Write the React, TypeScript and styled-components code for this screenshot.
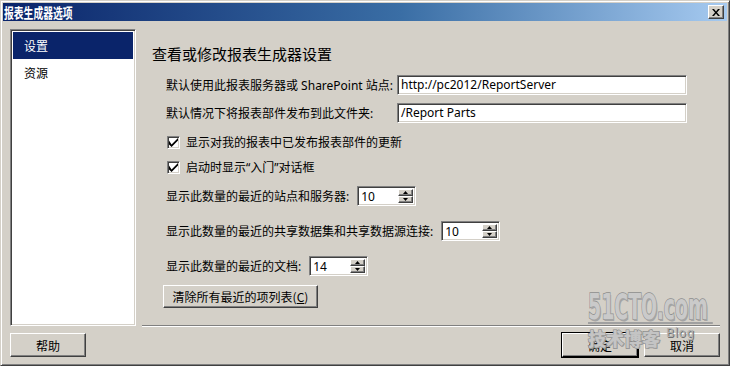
import React from 'react';
import styled, { createGlobalStyle, css } from 'styled-components';

const GlobalStyle = createGlobalStyle`
  html, body {
    margin: 0;
    padding: 0;
    background: #d4d0c8;
  }
  * {
    box-sizing: border-box;
  }
`;

const FONT = `"Noto Sans", "Noto Sans CJK SC", sans-serif`;

const raised = css`
  border: 1px solid;
  border-color: #ffffff #404040 #404040 #ffffff;
  box-shadow: inset -1px -1px #808080, inset 1px 1px #d4d0c8;
`;

const sunken = css`
  border: 1px solid;
  border-color: #808080 #ffffff #ffffff #808080;
  box-shadow: inset 1px 1px #404040, inset -1px -1px #d4d0c8;
`;

const Window = styled.div`
  position: relative;
  width: 730px;
  height: 366px;
  background: #d4d0c8;
  border: 1px solid;
  border-color: #d4d0c8 #404040 #404040 #d4d0c8;
  box-shadow: inset 1px 1px #ffffff, inset -1px -1px #808080;
  padding: 2px;
  display: flex;
  flex-direction: column;
  font-family: ${FONT};
  font-size: 12px;
  color: #000;
  overflow: hidden;
`;

const TitleBar = styled.div`
  height: 18px;
  flex: none;
  display: flex;
  align-items: center;
  justify-content: space-between;
  padding: 0 3px 0 1px;
  background: linear-gradient(to right, #0a246a 0%, #3a6ea5 55%, #a6caf0 100%);
`;

const TitleText = styled.span`
  display: inline-block;
  color: #fff;
  font-family: "Noto Sans CJK SC", sans-serif;
  font-weight: bold;
  font-size: 14px;
  line-height: 18px;
  transform: scaleX(0.7);
  transform-origin: left center;
`;

const CloseButton = styled.div`
  ${raised};
  width: 16px;
  height: 14px;
  background: #d4d0c8;
  display: flex;
  align-items: center;
  justify-content: center;
`;

const Body = styled.div`
  flex: 1;
  display: flex;
  flex-direction: column;
  padding: 8px 7px 0 7px;
`;

const MainRow = styled.div`
  display: flex;
  height: 297px;
`;

const Sidebar = styled.div`
  ${sunken};
  width: 126px;
  background: #fff;
  padding: 2px;
  display: flex;
  flex-direction: column;
`;

const NavItem = styled.div<{ $active?: boolean }>`
  height: 27px;
  line-height: 27px;
  padding-left: 11px;
  font-family: "Noto Sans CJK SC", sans-serif;
  font-size: 12px;
  background: ${(p) => (p.$active ? '#0a246a' : 'transparent')};
  color: ${(p) => (p.$active ? '#fff' : '#000')};
`;

const Content = styled.div`
  flex: 1;
  margin-left: 6px;
  border-bottom: 1px solid #808080;
  box-shadow: 0 1px #ffffff;
  padding-top: 15px;
  display: flex;
  flex-direction: column;
`;

const Heading = styled.div`
  padding-left: 10px;
  height: 20px;
  line-height: 20px;
  font-size: 15px;
`;

const Row = styled.div<{ $top: number }>`
  display: flex;
  align-items: center;
  margin-top: ${(p) => p.$top}px;
  padding-left: 24px;
  gap: 8px;
`;

const FieldLabel = styled.span<{ $width?: number }>`
  white-space: nowrap;
  ${(p) => p.$width && `width: ${p.$width}px; flex: none;`}
`;

const TextInput = styled.div`
  ${sunken};
  width: 290px;
  height: 20px;
  background: #fff;
  padding: 0 3px;
  line-height: 18px;
  font-family: "Noto Sans", sans-serif;
  font-size: 12px;
  white-space: nowrap;
`;

const CheckRow = styled.label<{ $top: number }>`
  display: flex;
  align-items: center;
  gap: 6px;
  height: 16px;
  margin-top: ${(p) => p.$top}px;
  padding-left: 25px;
`;

const CheckBox = styled.span`
  ${sunken};
  width: 13px;
  height: 13px;
  background: #fff;
  display: flex;
  align-items: center;
  justify-content: center;
`;

const Spin = styled.div`
  ${sunken};
  width: 59px;
  height: 20px;
  background: #fff;
  display: flex;
  padding: 2px;
`;

const SpinValue = styled.span`
  flex: 1;
  line-height: 16px;
  padding-left: 1px;
  font-family: "Noto Sans", sans-serif;
`;

const SpinButtons = styled.div`
  width: 15px;
  display: flex;
  flex-direction: column;
`;

const SpinArrow = styled.div`
  ${raised};
  flex: 1;
  background: #d4d0c8;
  display: flex;
  align-items: center;
  justify-content: center;
`;

const PushButton = styled.div<{ $width: number; $default?: boolean }>`
  ${raised};
  width: ${(p) => p.$width}px;
  height: 24px;
  background: #d4d0c8;
  display: flex;
  align-items: center;
  justify-content: center;
  font-family: "Noto Sans CJK SC", sans-serif;
  font-size: 12px;
  ${(p) =>
    p.$default &&
    css`
      outline: 1px solid #000;
      outline-offset: 0;
      border-color: #ffffff #000 #000 #ffffff;
    `}
`;

const ClearButton = styled(PushButton)`
  margin-top: 9px;
  margin-left: 21px;
  height: 23px;
`;

const Footer = styled.div`
  display: flex;
  justify-content: space-between;
  margin-top: 7px;
`;

const FooterRight = styled.div`
  display: flex;
  gap: 6px;
`;

const Watermark = styled.div`
  position: absolute;
  left: 587px;
  top: 290px;
  width: 130px;
  pointer-events: none;
`;

const WatermarkLogo = styled.div`
  font-family: "DejaVu Sans Condensed", "DejaVu Sans", sans-serif;
  font-weight: 900;
  font-size: 35px;
  line-height: 32px;
  transform: scaleX(0.6);
  transform-origin: left top;
  white-space: nowrap;
  color: #cacaca;
  -webkit-text-stroke: 1.6px #8e8e8e;
  paint-order: stroke fill;
  text-shadow: 2px 2px 0 #a4a4a4;
  width: 208px;
  height: 33px;
  border-bottom: 2px solid #a0a0a0;
`;

const WatermarkSub = styled.div`
  display: flex;
  align-items: flex-start;
  gap: 6px;
  margin-top: 3px;
`;

const WatermarkCjk = styled.span`
  font-family: "Noto Sans CJK SC", sans-serif;
  font-weight: 900;
  font-size: 18px;
  line-height: 22px;
  color: #c4c4c4;
  -webkit-text-stroke: 1.2px #8a8a8a;
  paint-order: stroke fill;
  text-shadow: 1px 1px 0 #9a9a9a;
`;

const WatermarkBlog = styled.span`
  font-family: "DejaVu Sans", sans-serif;
  font-size: 12px;
  line-height: 12px;
  color: #b0b0b0;
  text-shadow: 1px 1px 0 #707070;
  letter-spacing: 0.5px;
`;

const Underline = styled.span`
  text-decoration: underline;
`;

function Check() {
  return (
    <svg width="9" height="9" viewBox="0 0 7 7">
      <path d="M0 2 L0 5 L2 7 L7 2 L7 0 L2 5 Z" fill="#000" />
    </svg>
  );
}

function Arrow({ up }: { up?: boolean }) {
  return (
    <svg width="5" height="3" viewBox="0 0 5 3">
      <path d={up ? 'M2.5 0 L5 3 L0 3 Z' : 'M0 0 L5 0 L2.5 3 Z'} fill="#000" />
    </svg>
  );
}

function SpinBox({ value }: { value: string }) {
  return (
    <Spin>
      <SpinValue>{value}</SpinValue>
      <SpinButtons>
        <SpinArrow>
          <Arrow up />
        </SpinArrow>
        <SpinArrow>
          <Arrow />
        </SpinArrow>
      </SpinButtons>
    </Spin>
  );
}

export default function App() {
  return (
    <>
      <GlobalStyle />
      <Window>
        <TitleBar>
          <TitleText>报表生成器选项</TitleText>
          <CloseButton>
            <svg width="8" height="7" viewBox="0 0 8 7">
              <path d="M0 0 L2 0 L4 2.5 L6 0 L8 0 L5 3.5 L8 7 L6 7 L4 4.5 L2 7 L0 7 L3 3.5 Z" fill="#000" />
            </svg>
          </CloseButton>
        </TitleBar>
        <Body>
          <MainRow>
            <Sidebar>
              <NavItem $active>设置</NavItem>
              <NavItem>资源</NavItem>
            </Sidebar>
            <Content>
              <Heading>查看或修改报表生成器设置</Heading>
              <Row $top={11}>
                <FieldLabel $width={223}>默认使用此报表服务器或 SharePoint 站点:</FieldLabel>
                <TextInput>http://pc2012/ReportServer</TextInput>
              </Row>
              <Row $top={8}>
                <FieldLabel $width={223}>默认情况下将报表部件发布到此文件夹:</FieldLabel>
                <TextInput>/Report Parts</TextInput>
              </Row>
              <CheckRow $top={11}>
                <CheckBox>
                  <Check />
                </CheckBox>
                显示对我的报表中已发布报表部件的更新
              </CheckRow>
              <CheckRow $top={9}>
                <CheckBox>
                  <Check />
                </CheckBox>
                启动时显示“入门”对话框
              </CheckRow>
              <Row $top={11}>
                <FieldLabel>显示此数量的最近的站点和服务器:</FieldLabel>
                <SpinBox value="10" />
              </Row>
              <Row $top={15}>
                <FieldLabel>显示此数量的最近的共享数据集和共享数据源连接:</FieldLabel>
                <SpinBox value="10" />
              </Row>
              <Row $top={15}>
                <FieldLabel>显示此数量的最近的文档:</FieldLabel>
                <SpinBox value="14" />
              </Row>
              <ClearButton $width={155}>
                清除所有最近的项列表(<Underline>C</Underline>)
              </ClearButton>
            </Content>
          </MainRow>
          <Footer>
            <PushButton $width={76}>帮助</PushButton>
            <FooterRight>
              <PushButton $width={76} $default>
                确定
              </PushButton>
              <PushButton $width={76}>取消</PushButton>
            </FooterRight>
          </Footer>
        </Body>
        <Watermark>
          <WatermarkLogo>51CTO.com</WatermarkLogo>
          <WatermarkSub>
            <WatermarkCjk>技术博客</WatermarkCjk>
            <WatermarkBlog>Blog</WatermarkBlog>
          </WatermarkSub>
        </Watermark>
      </Window>
    </>
  );
}
